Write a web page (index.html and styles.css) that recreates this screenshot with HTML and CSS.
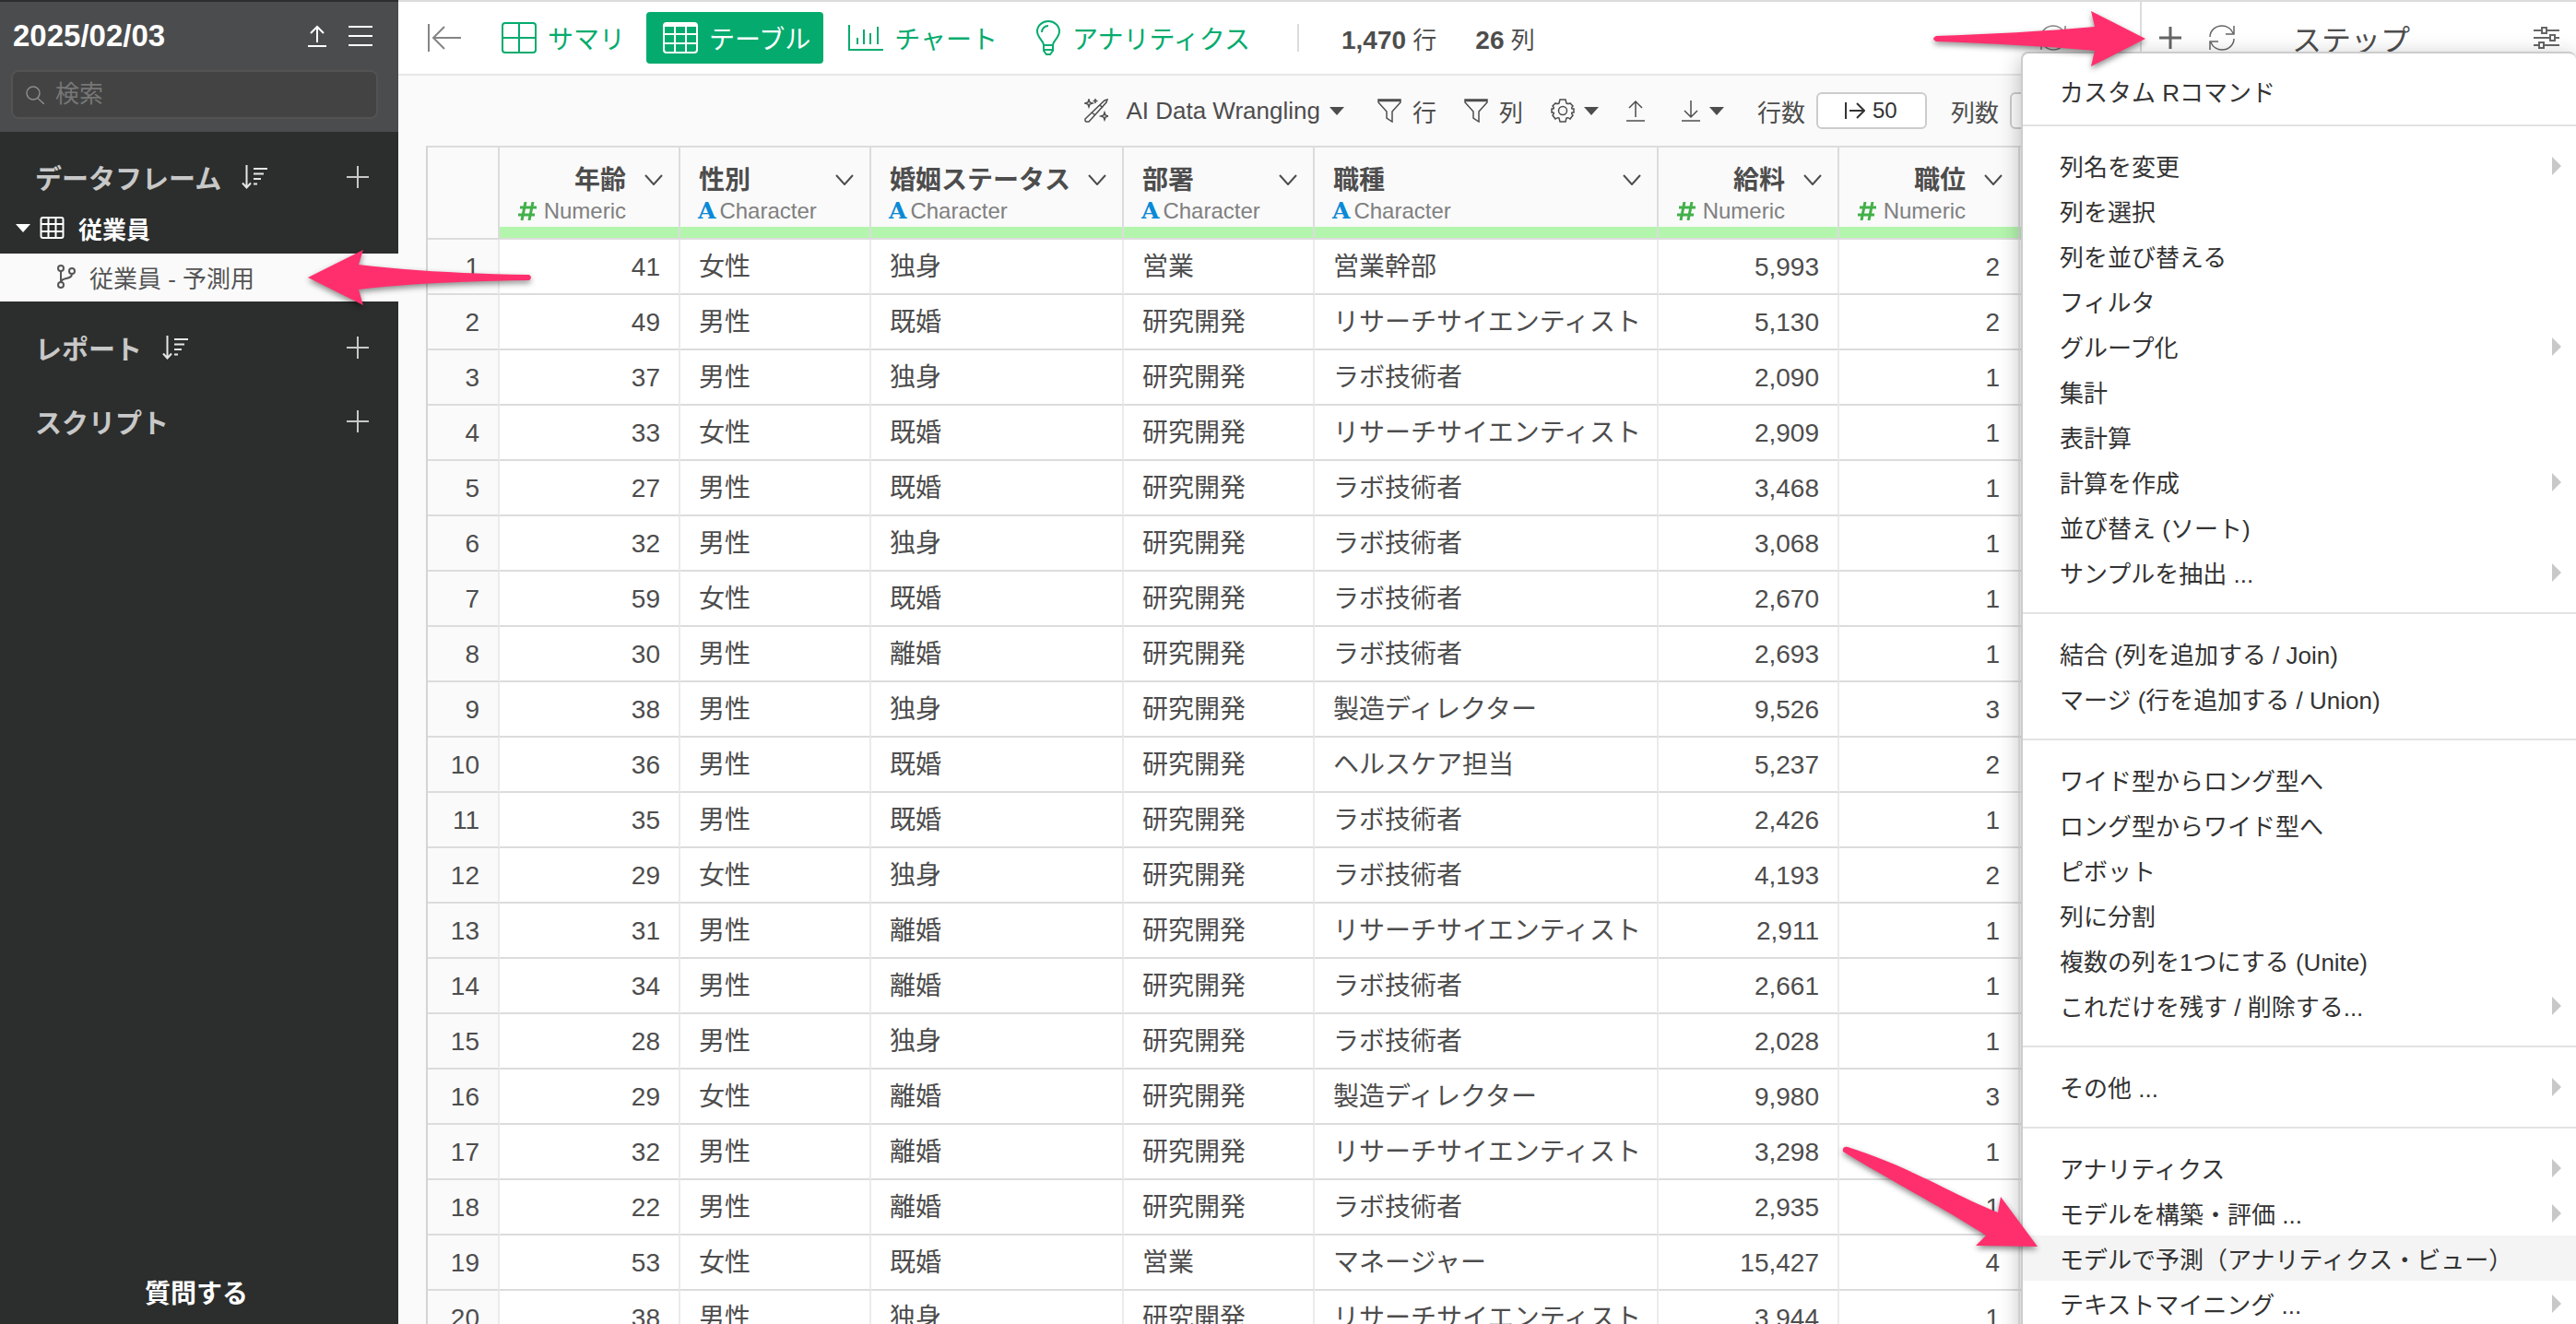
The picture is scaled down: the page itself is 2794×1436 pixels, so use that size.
FILE: index.html
```html
<!DOCTYPE html>
<html lang="ja">

<head>
    <meta charset="UTF-8">
    <meta name="viewport" content="width=device-width, initial-scale=1.0">
    <title>2025/02/03</title>
    <link rel="stylesheet" href="styles.css">
</head>

<body>
    <!-- shared icons -->
    <svg class="sprite" xmlns="http://www.w3.org/2000/svg">
        <symbol id="i-plus" viewBox="0 0 24 24"><path d="M12 0v24M0 12h24" /></symbol>
        <symbol id="i-sort" viewBox="0 0 28 26"><path d="M5.500 0v24M1 19.500l4.500 5 4.500-5M13 4h15M13 9.500h11M13 15h8M13 20.500h4" /></symbol>
        <symbol id="i-upload" viewBox="0 0 20 24"><path d="M10 19V2M3 9l7-7 7 7M0 23h20" /></symbol>
        <symbol id="i-download" viewBox="0 0 20 24"><path d="M10 1v18M3 12l7 7 7-7M0 23h20" /></symbol>
        <symbol id="i-funnel" viewBox="0 0 26 26"><path d="M1 1h24v3l-9 10v11l-6-4v-7L1 4zM1 2.500h24" /></symbol>
        <symbol id="i-refresh" viewBox="0 0 28 28"><path d="M1 13C1 6 7 1 14 1c5 0 10 3 12 8M27 1v9h-9M27 15c0 7-6 12-13 12-5 0-10-3-12-8M1 27v-9h9" /></symbol>
        <symbol id="i-chevron" viewBox="0 0 20 12"><path d="M1 1l9 10 9-10" /></symbol>
        <symbol id="i-limit" viewBox="0 0 22 18"><path d="M1 0v18M5 9h16M13 1l8 8-8 8" /></symbol>
        <symbol id="i-hash" viewBox="0 0 20 20"><path d="M8 0L4 20M16 0l-4 20M2 6h18M0 14h18" /></symbol>
    </svg>

    <div class="app">
        <aside class="sidebar">
            <div class="side-head">
                <div class="project">
                    <h1>2025/02/03</h1>
                    <button class="icon-btn" aria-label="アップロード"><svg class="icon up-lg"><use href="#i-upload" /></svg></button>
                    <button class="icon-btn" aria-label="メニュー"><svg class="icon burger" viewBox="0 0 26 22"><path d="M0 1h26M0 11h26M0 21h26" /></svg></button>
                </div>
                <label class="search">
                    <svg class="icon" viewBox="0 0 20 20"><circle cx="8" cy="8" r="7" /><path d="M13 13.500l7 6.500" /></svg>
                    <input type="text" placeholder="検索" aria-label="検索">
                </label>
            </div>

            <div class="section">
                <h2>データフレーム</h2>
                <button class="icon-btn" aria-label="並び替え"><svg class="icon sort"><use href="#i-sort" /></svg></button>
                <button class="icon-btn add" aria-label="追加"><svg class="icon plus"><use href="#i-plus" /></svg></button>
            </div>
            <a class="frame" href="#">
                <i class="caret"></i>
                <svg class="icon grid-sm" viewBox="0 0 26 24"><rect x="1" y="1" width="24" height="22" rx="2" /><path d="M9 1v22M17 1v22M1 8h24M1 16h24" /></svg>
                <span>従業員</span>
            </a>
            <a class="branch" href="#">
                <svg class="icon" viewBox="0 0 20 26"><circle cx="4" cy="4" r="3" /><circle cx="4" cy="22" r="3" /><circle cx="16" cy="7" r="3" /><path d="M4 7v12M16 10c0 7-11 3-12 9" /></svg>
                <span>従業員 - 予測用</span>
            </a>
            <div class="section">
                <h2>レポート</h2>
                <button class="icon-btn" aria-label="並び替え"><svg class="icon sort"><use href="#i-sort" /></svg></button>
                <button class="icon-btn add" aria-label="追加"><svg class="icon plus"><use href="#i-plus" /></svg></button>
            </div>
            <div class="section">
                <h2>スクリプト</h2>
                <button class="icon-btn add" aria-label="追加"><svg class="icon plus"><use href="#i-plus" /></svg></button>
            </div>
            <button class="ask">質問する</button>
        </aside>

        <main class="main">
            <div class="topbar">
                <button class="icon-btn collapse" aria-label="閉じる"><svg class="icon" viewBox="0 0 36 30"><path d="M1 0v30M6 15h30M18 3L6 15l12 12" /></svg></button>
                <nav class="tabs">
                    <button class="tab">
                        <svg class="icon" viewBox="0 0 38 34"><rect x="1" y="1" width="36" height="32" rx="3" /><path d="M19 1v32M1 17h36" /></svg>
                        サマリ
                    </button>
                    <button class="tab active">
                        <svg class="icon" viewBox="0 0 38 34"><rect x="1" y="1" width="36" height="32" rx="3" /><path d="M1 3h36" stroke-width="4" /><path d="M13 1v32M25 1v32M1 13h36M1 23h36" /></svg>
                        テーブル
                    </button>
                    <button class="tab">
                        <svg class="icon" viewBox="0 0 38 34"><path d="M1 3v27h37M10 24v-7M17 24V8M24 24V12M32 24V5" /></svg>
                        チャート
                    </button>
                    <button class="tab">
                        <svg class="icon bulb" viewBox="0 0 28 38"><path d="M9 27c0-5-7-8-7-15a12 11 0 0 1 24 0c0 7-7 10-7 15zM9 27v6l3 4h4l3-4v-6M9 32h10M7 13c0-4 3-7 7-7" /></svg>
                        アナリティクス
                    </button>
                </nav>
                <div class="counts">
                    <span><b>1,470</b> 行</span>
                    <span><b>26</b> 列</span>
                </div>
                <button class="icon-btn reload" aria-label="更新"><svg class="icon refresh"><use href="#i-refresh" /></svg></button>
            </div>

            <div class="toolbar">
                <button class="tool wrangle">
                    <svg class="icon" viewBox="0 0 26 26"><path d="M1 22L22 2l3-1-1 3L5 25H2L1 24zM8 15l4 3M17 7l3 3" /><path d="M5 1l1 3 3 1-3 1-1 3-1-3-3-1 3-1zM12 0v5M9.500 2.500h5M22 15l1 3 3 1-3 1-1 3-1-3-3-1 3-1z" /></svg>
                    <span>AI Data Wrangling</span>
                    <i class="caret"></i>
                </button>
                <button class="tool"><svg class="icon funnel"><use href="#i-funnel" /></svg>行</button>
                <button class="tool"><svg class="icon funnel"><use href="#i-funnel" /></svg>列</button>
                <button class="tool" aria-label="設定">
                    <svg class="icon gear" viewBox="0 0 26 26"><path d="M10 1h6l1 4q2 1 4 0l3 3q-2 2-1 3l2 0v4l-2 0q-1 1 1 3l-3 4q-2-2-4-1l-1 4h-6l-1-4q-2-1-4 1l-3-4q2-2 1-3l-2 0v-4l2 0q1-1-1-3l3-3q2 1 4 0z" /><circle cx="13" cy="13" r="4.500" /></svg>
                    <i class="caret"></i>
                </button>
                <button class="tool" aria-label="アップロード"><svg class="icon updown"><use href="#i-upload" /></svg></button>
                <button class="tool download" aria-label="ダウンロード"><svg class="icon updown"><use href="#i-download" /></svg><i class="caret"></i></button>
                <div class="fields">
                    <label>行数 <span class="box"><svg class="icon"><use href="#i-limit" /></svg><input type="text" value="50"></span></label>
                    <label>列数 <span class="box"><svg class="icon"><use href="#i-limit" /></svg><input type="text" value=""></span></label>
                </div>
            </div>

            <div class="grid">
                <table>
                    <colgroup>
                        <col class="c-no"><col class="c-num"><col class="c-chr"><col class="c-status"><col class="c-chr"><col class="c-job"><col class="c-num"><col class="c-num"><col class="c-num">
                    </colgroup>
                    <thead>
                        <tr></tr>
                    </thead>
                    <tbody></tbody>
                </table>
            </div>
        </main>

        <section class="steps">
            <div class="topbar">
                <button class="icon-btn" aria-label="ステップを追加"><svg class="icon plus bold"><use href="#i-plus" /></svg></button>
                <button class="icon-btn" aria-label="更新"><svg class="icon refresh"><use href="#i-refresh" /></svg></button>
                <h2>ステップ</h2>
                <button class="icon-btn sliders" aria-label="設定"><svg class="icon" viewBox="0 0 28 24"><path d="M0 4h9M14 4h14M0 12h18M23 12h5M0 20h6M11 20h17" /><rect x="9" y="1" width="5" height="6" /><rect x="18" y="9" width="5" height="6" /><rect x="6" y="17" width="5" height="6" /></svg></button>
            </div>
        </section>

        <div class="menu">
            <ul>
                <li><a href="#">カスタム Rコマンド</a></li>
            </ul>
            <ul>
                <li><a href="#" class="more">列名を変更</a></li>
                <li><a href="#">列を選択</a></li>
                <li><a href="#">列を並び替える</a></li>
                <li><a href="#">フィルタ</a></li>
                <li><a href="#" class="more">グループ化</a></li>
                <li><a href="#">集計</a></li>
                <li><a href="#">表計算</a></li>
                <li><a href="#" class="more">計算を作成</a></li>
                <li><a href="#">並び替え (ソート)</a></li>
                <li><a href="#" class="more">サンプルを抽出 ...</a></li>
            </ul>
            <ul>
                <li><a href="#">結合 (列を追加する / Join)</a></li>
                <li><a href="#">マージ (行を追加する / Union)</a></li>
            </ul>
            <ul>
                <li><a href="#">ワイド型からロング型へ</a></li>
                <li><a href="#">ロング型からワイド型へ</a></li>
                <li><a href="#">ピボット</a></li>
                <li><a href="#">列に分割</a></li>
                <li><a href="#">複数の列を1つにする (Unite)</a></li>
                <li><a href="#" class="more">これだけを残す / 削除する...</a></li>
            </ul>
            <ul>
                <li><a href="#" class="more">その他 ...</a></li>
            </ul>
            <ul>
                <li><a href="#" class="more">アナリティクス</a></li>
                <li><a href="#" class="more">モデルを構築・評価 ...</a></li>
                <li><a href="#" class="selected">モデルで予測（アナリティクス・ビュー）</a></li>
                <li><a href="#" class="more">テキストマイニング ...</a></li>
            </ul>
        </div>

        <!-- guide arrows -->
        <svg class="arrow arrow-branch" viewBox="0 0 244 60"><path d="M0 30L60 0 55 16C110 23 180 26 240 27Q244 30 240 33C180 34 110 36 55 43L60 60Z" /></svg>
        <svg class="arrow arrow-plus" viewBox="0 0 230 60"><path d="M230 30L171 0 175 17C120 22 60 25 3 27Q-3 30 3 33C60 35 120 38 175 43L171 60Z" /></svg>
        <svg class="arrow arrow-model" viewBox="0 0 212 110"><path d="M212 109L172 55 169 72C125 55 75 23 6 1Q0 0 1 6C60 42 115 70 156 97L145 108Z" /></svg>
    </div>
    <script src="script.js"></script>
</body>

</html>
```

FILE: styles.css
```css
* {
    margin: 0;
    padding: 0;
    box-sizing: border-box;
}

body,
button,
input {
    font-family: "Liberation Sans", "Noto Sans CJK JP", sans-serif;
    font-size: 26px;
    color: #4d4d4d;
}

button {
    background: none;
    border: none;
    cursor: pointer;
}

a {
    color: inherit;
    text-decoration: none;
}

.sprite {
    display: none;
}

.icon {
    flex: none;
    fill: none;
    stroke: currentColor;
    stroke-width: 2;
}

.icon-btn {
    display: flex;
    color: inherit;
}

.plus {
    width: 24px;
    height: 24px;
}

.plus.bold {
    stroke-width: 3;
}

.refresh {
    width: 28px;
    height: 28px;
    stroke-width: 1.5;
}

.caret {
    flex: none;
    border: 8px solid transparent;
    border-top: 9px solid currentColor;
    border-bottom: 0;
}

.app {
    position: relative;
    display: flex;
    height: 100vh;
    overflow: hidden;
    background-color: #fafafa;
}

/* sidebar */

.sidebar {
    flex: 0 0 432px;
    display: flex;
    flex-direction: column;
    background-color: #2c2e2d;
    color: #c8c8c8;
}

.side-head {
    height: 143px;
    padding: 12px 22px 0 12px;
    border-top: 2px solid #2c2d2e;
    background-color: #4b4c4e;
    color: #fff;
}

.project {
    display: flex;
    align-items: center;
    gap: 24px;
    height: 50px;
    padding: 0 6px 0 2px;
}

.project h1 {
    flex: 1;
    font-size: 33px;
}

.up-lg {
    width: 20px;
    height: 28px;
}

.burger {
    width: 26px;
    height: 22px;
}

.search {
    display: flex;
    align-items: center;
    gap: 12px;
    height: 53px;
    margin-top: 12px;
    padding: 0 14px;
    border: 2px solid #535353;
    border-radius: 8px;
    background-color: #434343;
    color: #8c8c8c;
}

.search .icon {
    width: 20px;
    height: 20px;
    stroke-width: 1.5;
}

.search input {
    width: 100%;
    border: none;
    outline: none;
    background: none;
    color: #fff;
}

.search input::placeholder {
    color: #777;
}

.section {
    display: flex;
    align-items: center;
    gap: 22px;
    height: 80px;
    padding: 0 32px 0 38px;
}

.side-head + .section {
    height: 78px;
    margin-top: 10px;
}

.section h2 {
    font-size: 29px;
    font-weight: 600;
}

.section .add {
    margin-left: auto;
}

.sort {
    width: 28px;
    height: 26px;
    color: #e6e6e6;
}

.frame {
    display: flex;
    align-items: center;
    height: 32px;
    margin-bottom: 12px;
    padding-left: 17px;
    color: #fff;
    font-weight: bold;
}

.grid-sm {
    width: 27px;
    height: 24px;
    margin: 0 15px 0 10px;
}

.branch {
    display: flex;
    align-items: center;
    gap: 15px;
    height: 52px;
    margin-bottom: 10px;
    padding: 0 0 2px 62px;
    background-color: #fafafa;
    color: #555;
}

.branch .icon {
    width: 20px;
    height: 26px;
}

.ask {
    margin-top: auto;
    padding: 12px 18px 15px 12px;
    color: #fff;
    font-size: 28px;
    font-weight: bold;
}

/* top bars */

.topbar {
    display: flex;
    align-items: center;
    height: 82px;
    border-top: 2px solid #dcdcdc;
    border-bottom: 2px solid #e6e6e6;
    background-color: #fff;
}

.main {
    flex: 1;
    display: flex;
    flex-direction: column;
    min-width: 0;
    overflow: hidden;
}

.collapse {
    margin: 0 26px 0 32px;
    color: #858585;
}

.collapse .icon {
    width: 36px;
    height: 30px;
}

.tabs {
    display: flex;
    gap: 9px;
}

.tab {
    display: flex;
    align-items: center;
    gap: 12px;
    height: 56px;
    padding: 0 14px 0 18px;
    border-radius: 4px;
    color: #05ab6e;
    font-size: 28px;
    white-space: nowrap;
}

.tab .icon {
    width: 38px;
    height: 34px;
}

.tab .bulb {
    width: 28px;
    height: 38px;
}

.tab.active {
    background-color: #05ab6e;
    color: #fff;
}

.counts {
    display: flex;
    align-items: center;
    gap: 42px;
    height: 30px;
    margin-left: 37px;
    padding-left: 46px;
    border-left: 2px solid #dcdcdc;
    white-space: nowrap;
}

.counts b {
    font-size: 28px;
}

.reload {
    margin: 0 80px 0 auto;
    color: #858585;
}

.toolbar {
    display: flex;
    align-items: center;
    justify-content: flex-end;
    gap: 30px;
    height: 76px;
    padding-right: 21px;
    white-space: nowrap;
}

.tool {
    display: flex;
    align-items: center;
    gap: 10px;
}

.tool .icon {
    width: 26px;
    height: 26px;
    stroke-width: 1.5;
}

.tool .funnel {
    margin-right: 2px;
}

.tool .updown {
    width: 20px;
    height: 24px;
}

.wrangle {
    margin-right: 6px;
}

.wrangle span {
    margin-left: 9px;
}

.download {
    margin: 0 6px 0 10px;
}

.fields {
    display: flex;
    gap: 26px;
}

.fields label {
    display: flex;
    align-items: center;
    gap: 12px;
}

.box {
    display: flex;
    align-items: center;
    justify-content: center;
    gap: 8px;
    width: 120px;
    height: 40px;
    border: 2px solid #ccc;
    border-radius: 6px;
    background-color: #fff;
    color: #333;
}

.box .icon {
    width: 22px;
    height: 18px;
}

.box input {
    width: 28px;
    border: none;
    outline: none;
    background: none;
    color: #333;
    font-size: 24px;
}

/* data table */

.grid {
    flex: 1;
    min-height: 0;
    margin-left: 30px;
    overflow: hidden;
    border-top: 2px solid #dcdcdc;
    border-left: 2px solid #d4d4d4;
}

table {
    width: 1923px;
    table-layout: fixed;
    border-spacing: 0;
}

.c-no {
    width: 78px;
}

.c-num {
    width: 196px;
}

.c-chr {
    width: 207px;
}

.c-status {
    width: 274px;
}

.c-job {
    width: 373px;
}

th {
    height: 100px;
    border-right: 2px solid #dcdcdc;
    border-bottom: 2px solid #dcdcdc;
    background-color: #fafafa;
    text-align: left;
}

.col-name {
    display: flex;
    align-items: center;
    justify-content: space-between;
    height: 36px;
    margin-top: 15px;
    padding: 0 17px 0 20px;
    font-size: 28px;
}

.col-name .icon {
    width: 20px;
    height: 12px;
    margin-top: 4px;
}

.col-type {
    display: flex;
    align-items: center;
    gap: 4px;
    height: 35px;
    padding: 0 57px 0 19px;
    color: #808080;
    font-size: 24px;
    font-weight: normal;
}

.col-type b {
    color: #0a8ad6;
    font-family: "DejaVu Serif", serif;
    font-size: 25px;
}

.col-type .icon {
    width: 20px;
    height: 20px;
    color: #43b04a;
    stroke-width: 3;
}

.col-bar {
    height: 12px;
    background-color: #b4f5ae;
}

th.num .col-name {
    justify-content: flex-end;
    gap: 20px;
}

th.num .col-type {
    justify-content: flex-end;
    gap: 8px;
}

td {
    height: 60px;
    padding: 2px 20px 0;
    border-right: 2px solid #ebebeb;
    border-bottom: 2px solid #dcdcdc;
    background-color: #fff;
    font-size: 28px;
    line-height: 40px;
    white-space: nowrap;
}

td.num,
td.no {
    text-align: right;
}

td.no {
    background-color: #fafafa;
}

/* steps panel */

.steps {
    flex: 0 0 473px;
    border-left: 2px solid #dcdcdc;
}

.steps .topbar {
    gap: 30px;
    padding: 0 18px 0 19px;
    color: #666;
}

.steps h2 {
    margin-left: 32px;
    color: #4d4d4d;
    font-size: 32px;
    font-weight: normal;
}

.sliders {
    margin-left: auto;
}

.sliders .icon {
    width: 28px;
    height: 24px;
}

.menu {
    position: absolute;
    top: 56px;
    right: 0;
    width: 602px;
    border: 2px solid #ccc;
    border-right: 0;
    border-radius: 8px;
    background-color: #fff;
    box-shadow: 0 6px 24px rgba(0, 0, 0, 0.28);
    color: #333;
}

.menu ul {
    padding: 18px 0 19px;
    border-bottom: 2px solid #e3e3e3;
    list-style: none;
}

.menu ul:first-child {
    padding: 16px 0 12px;
}

.menu a {
    display: flex;
    align-items: center;
    justify-content: space-between;
    height: 49px;
    padding: 0 16px 0 40px;
}

.menu .more::after {
    content: "";
    border: 10px solid transparent;
    border-left-color: #c8c8c8;
    border-right: 0;
}

.menu .selected {
    background-color: #f4f4f4;
}

/* guide arrows */

.arrow {
    position: absolute;
    overflow: visible;
    fill: #ff2f6d;
    filter: drop-shadow(0 3px 3px rgba(0, 0, 0, 0.45));
}

.arrow-branch {
    top: 271px;
    left: 334px;
    width: 244px;
    height: 60px;
}

.arrow-plus {
    top: 12px;
    right: 467px;
    width: 230px;
    height: 60px;
}

.arrow-model {
    top: 1243px;
    right: 584px;
    width: 212px;
    height: 110px;
}
```

FILE: script.js
```javascript
const columns = [
    ["年齢", "num"],
    ["性別", "chr"],
    ["婚姻ステータス", "chr"],
    ["部署", "chr"],
    ["職種", "chr"],
    ["給料", "num"],
    ["職位", "num"]
];

const rows = [
    [41, "女性", "独身", "営業", "営業幹部", "5,993", 2],
    [49, "男性", "既婚", "研究開発", "リサーチサイエンティスト", "5,130", 2],
    [37, "男性", "独身", "研究開発", "ラボ技術者", "2,090", 1],
    [33, "女性", "既婚", "研究開発", "リサーチサイエンティスト", "2,909", 1],
    [27, "男性", "既婚", "研究開発", "ラボ技術者", "3,468", 1],
    [32, "男性", "独身", "研究開発", "ラボ技術者", "3,068", 1],
    [59, "女性", "既婚", "研究開発", "ラボ技術者", "2,670", 1],
    [30, "男性", "離婚", "研究開発", "ラボ技術者", "2,693", 1],
    [38, "男性", "独身", "研究開発", "製造ディレクター", "9,526", 3],
    [36, "男性", "既婚", "研究開発", "ヘルスケア担当", "5,237", 2],
    [35, "男性", "既婚", "研究開発", "ラボ技術者", "2,426", 1],
    [29, "女性", "独身", "研究開発", "ラボ技術者", "4,193", 2],
    [31, "男性", "離婚", "研究開発", "リサーチサイエンティスト", "2,911", 1],
    [34, "男性", "離婚", "研究開発", "ラボ技術者", "2,661", 1],
    [28, "男性", "独身", "研究開発", "ラボ技術者", "2,028", 1],
    [29, "女性", "離婚", "研究開発", "製造ディレクター", "9,980", 3],
    [32, "男性", "離婚", "研究開発", "リサーチサイエンティスト", "3,298", 1],
    [22, "男性", "離婚", "研究開発", "ラボ技術者", "2,935", 1],
    [53, "女性", "既婚", "営業", "マネージャー", "15,427", 4],
    [38, "男性", "独身", "研究開発", "リサーチサイエンティスト", "3,944", 1]
];

const types = {
    num: '<svg class="icon"><use href="#i-hash" /></svg>Numeric',
    chr: "<b>A</b>Character"
};

let head = "<th></th>";
columns.forEach(function ([name, type]) {
    head += `<th class="${type}">
        <div class="col-name">${name}<svg class="icon"><use href="#i-chevron" /></svg></div>
        <div class="col-type">${types[type]}</div>
        <div class="col-bar"></div>
    </th>`;
});
head += '<th><div class="col-name"></div><div class="col-type"></div><div class="col-bar"></div></th>';
document.querySelector("thead tr").innerHTML = head;

let body = "";
rows.forEach(function (row, i) {
    const cells = row.map((value, c) => `<td class="${columns[c][1]}">${value}</td>`);
    body += `<tr><td class="no">${i + 1}</td>${cells.join("")}<td></td></tr>`;
});
document.querySelector("tbody").innerHTML = body;
```
